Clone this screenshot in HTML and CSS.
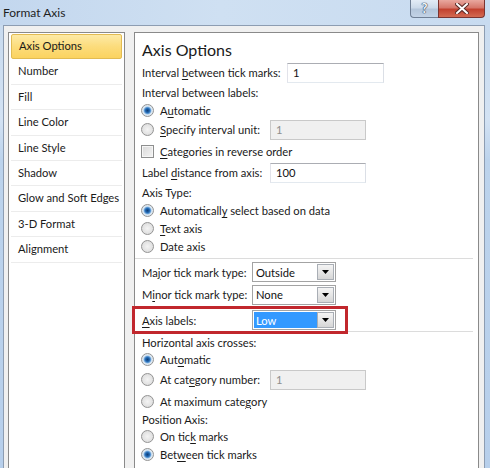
FILE: index.html
```html
<!DOCTYPE html>
<html>
<head>
<meta charset="utf-8">
<title>Format Axis</title>
<link rel="stylesheet" href="styles.css">
</head>
<body>
<div class="window">
  <div class="titlebar">
    <span class="title">Format Axis</span>
    <div class="caption-buttons">
      <div class="cbtn help">?</div>
      <div class="cbtn close">
        <svg width="14" height="11" viewBox="0 0 14 11"><path d="M2 1 L12 10 M12 1 L2 10" stroke="#5a2a26" stroke-width="4" stroke-linecap="square"/><path d="M2 1 L12 10 M12 1 L2 10" stroke="#fff" stroke-width="2" stroke-linecap="square"/></svg>
      </div>
    </div>
  </div>
  <div class="client">
    <ul class="nav">
      <li class="nav-item active">Axis Options</li>
      <li class="nav-item">Number</li>
      <li class="nav-item">Fill</li>
      <li class="nav-item">Line Color</li>
      <li class="nav-item">Line Style</li>
      <li class="nav-item">Shadow</li>
      <li class="nav-item">Glow and Soft Edges</li>
      <li class="nav-item">3-D Format</li>
      <li class="nav-item">Alignment</li>
    </ul>
    <div class="panel">
      <h1 class="panel-title">Axis Options</h1>

      <div class="row h23"><span class="lbl w145">Interval <u>b</u>etween tick marks:</span><span class="input w97">1</span></div>
      <div class="row h17"><span>Interval between labels:</span></div>
      <div class="row h18"><span class="radio checked"></span><span>A<u>u</u>tomatic</span></div>
      <div class="row h21"><span class="radio"></span><span class="lbl w110"><u>S</u>pecify interval unit:</span><span class="input disabled w96">1</span></div>
      <div class="row h22"><span class="checkbox"></span><span><u>C</u>ategories in reverse order</span></div>
      <div class="row h21"><span class="lbl w128">Label <u>d</u>istance from axis:</span><span class="input w96">100</span></div>
      <div class="row h18"><span>Axis Type:</span></div>
      <div class="row h18"><span class="radio checked"></span><span>Automaticall<u>y</u> select based on data</span></div>
      <div class="row h18"><span class="radio"></span><span><u>T</u>ext axis</span></div>
      <div class="row h18"><span class="radio"></span><span>Date axis</span></div>

      <div class="separator sep-a"></div>

      <div class="row h22"><span class="lbl w110">Ma<u>j</u>or tick mark type:</span><span class="select"><span class="select-value">Outside</span><span class="select-btn"><svg width="7" height="4" viewBox="0 0 7 4"><path d="M0 0 H7 L3.5 4 Z" fill="#000"/></svg></span></span></div>
      <div class="row h23"><span class="lbl w110">M<u>i</u>nor tick mark type:</span><span class="select"><span class="select-value">None</span><span class="select-btn"><svg width="7" height="4" viewBox="0 0 7 4"><path d="M0 0 H7 L3.5 4 Z" fill="#000"/></svg></span></span></div>
      <div class="row highlight"><span class="lbl w110"><u>A</u>xis labels:</span><span class="select"><span class="select-value selected">Low</span><span class="select-btn"><svg width="7" height="4" viewBox="0 0 7 4"><path d="M0 0 H7 L3.5 4 Z" fill="#000"/></svg></span></span></div>

      <div class="separator sep-b"></div>

      <div class="row h17"><span>Horizontal axis crosses:</span></div>
      <div class="row h17"><span class="radio checked"></span><span>Aut<u>o</u>matic</span></div>
      <div class="row h23"><span class="radio"></span><span class="lbl w110">At cat<u>e</u>gory number:</span><span class="input disabled w96">1</span></div>
      <div class="row h20"><span class="radio"></span><span>At maximum cate<u>g</u>ory</span></div>
      <div class="row h17"><span>Position Axis:</span></div>
      <div class="row h17"><span class="radio"></span><span>On tic<u>k</u> marks</span></div>
      <div class="row h19"><span class="radio checked"></span><span>Bet<u>w</u>een tick marks</span></div>
    </div>
  </div>
</div>
</body>
</html>
```

FILE: styles.css
```css
* { box-sizing: border-box; }

html, body {
  margin: 0;
  padding: 0;
  overflow: hidden;
}

body {
  font-family: Lato, "Open Sans", sans-serif;
  font-size: 11.2px;
  color: #1a1a1a;
}

u { text-decoration: underline; text-underline-offset: 2px; }

.window {
  width: 490px;
  height: 468px;
  display: flex;
  flex-direction: column;
  background: linear-gradient(180deg, #c6d9ee 0px, #d3e2f3 120px, #bcd3ec 160px, #b7cfeb 468px);
  overflow: hidden;
}

/* Title bar */
.titlebar {
  height: 25px;
  display: flex;
  align-items: flex-start;
  padding-right: 5px;
  flex-shrink: 0;
  background: linear-gradient(90deg, #c3d7ee 0%, #cfe0f2 45%, #c8dbf0 100%);
}

.title {
  font-size: 12px;
  color: #1e1e1e;
  padding: 5px 0 0 3px;
  line-height: 16px;
}

.caption-buttons {
  margin-left: auto;
  display: flex;
  height: 18px;
}

.cbtn {
  height: 18px;
  display: flex;
  align-items: center;
  justify-content: center;
  border: 1px solid #6f7f95;
  border-top: none;
}

.help {
  width: 28px;
  border-radius: 0 0 0 4px;
  border-right: none;
  background: linear-gradient(180deg, #e3ecf6 0%, #ccdaea 45%, #b4c6db 55%, #c3d3e6 100%);
  font-size: 13px;
  font-weight: bold;
  color: #f4f7fb;
  text-shadow: 0 0 1px #2c3e57, 0 0 1px #2c3e57, 0 0 1px #2c3e57;
  line-height: 1;
}

.close {
  width: 47px;
  border-color: #7a3431;
  border-radius: 0 0 4px 0;
  background: linear-gradient(180deg, #e9a89f 0%, #d6776b 45%, #c2412f 55%, #d36a52 100%);
}

/* Client area */
.client {
  flex: 1;
  display: flex;
  margin: 0 5px 0 3px;
  padding: 6px 5px 0 4px;
  background: #f0f0f0;
  border: 1px solid #8d9db2;
  border-bottom: none;
  min-height: 0;
}

/* Left navigation list */
.nav {
  list-style: none;
  margin: 0;
  padding: 1px 1px 0 2px;
  width: 117px;
  flex-shrink: 0;
  background: #fff;
  border: 1px solid #8a8a8a;
  border-bottom: none;
}

.nav-item {
  height: 25.4px;
  line-height: 24px;
  padding-left: 7px;
  color: #1a1a1a;
  border-bottom: 1px solid #ececec;
  margin: 0 1px 0 0;
  white-space: nowrap;
}

.nav-item.active {
  background: linear-gradient(180deg, #fdeaa6 0%, #fcdc7c 50%, #fbd35f 100%);
  border: 1px solid #e2bb52;
  border-radius: 2px;
  line-height: 22px;
}

/* Right panel */
.panel {
  margin-left: 9px;
  flex: 1;
  background: #fff;
  border: 1px solid #8a8a8a;
  border-bottom: none;
  padding: 6px 0 0 0;
}

.panel-title {
  margin: 0;
  height: 22px;
  padding-left: 7px;
  font-size: 16px;
  font-weight: normal;
  line-height: 22px;
  color: #1a1a1a;
}

.row {
  display: flex;
  align-items: center;
  padding-left: 7px;
  white-space: nowrap;
}

.h17 { height: 17px; }
.h18 { height: 18px; }
.h19 { height: 19px; }
.h20 { height: 20px; }
.h21 { height: 21px; }
.h22 { height: 22px; }
.h23 { height: 23px; }

.lbl { flex-shrink: 0; }
.w145 { width: 145px; }
.w128 { width: 128px; }
.w110 { width: 110px; }

.input {
  height: 20px;
  display: flex;
  align-items: center;
  padding-left: 5px;
  background: #fff;
  border: 1px solid #abadb3;
  border-left-color: #e2e3ea;
  border-right-color: #dbdfe6;
  border-bottom-color: #e3e9ef;
  color: #111;
}

.w97 { width: 97px; }
.w96 { width: 96px; }

.input.disabled {
  background: #f0f0f0;
  border-color: #c9c9c9;
  color: #8e8e8e;
}

/* Radio & checkbox */
.radio {
  width: 13px;
  height: 13px;
  border-radius: 50%;
  border: 1px solid #939393;
  background: radial-gradient(circle at 50% 50%, #f4f4f4 0%, #e4e4e4 55%, #d6d6d6 100%);
  margin: 0 6px 0 -1px;
  flex-shrink: 0;
}

.radio.checked {
  background: radial-gradient(circle at 50% 50%, #0f3f78 0%, #1f64ad 25%, #5d9ad6 40%, #d8e6f2 55%, #eeeeee 100%);
}

.checkbox {
  width: 13px;
  height: 13px;
  border: 1px solid #8e8f8f;
  background: linear-gradient(135deg, #d9d9d9 0%, #f4f4f4 100%);
  box-shadow: inset 0 0 0 1px #f6f6f6;
  margin: 0 6px 0 -1px;
  flex-shrink: 0;
}

/* Select */
.select {
  width: 84px;
  height: 20px;
  display: flex;
  align-items: stretch;
  border: 1px solid #a3a3a3;
  background: #fff;
  padding: 1px;
}

.select-value {
  flex: 1;
  display: flex;
  align-items: center;
  padding-left: 2px;
  color: #111;
}

.select-value.selected {
  background: #3399ff;
  color: #fff;
}

.select-btn {
  width: 17px;
  display: flex;
  align-items: center;
  justify-content: center;
  border: 1px solid #a9aeb5;
  background: linear-gradient(180deg, #f4f4f4 0%, #e6e6e6 50%, #d6d6d6 100%);
}

/* Highlighted row (annotation) */
.highlight {
  position: relative;
  z-index: 1;
  width: fit-content;
  height: 28px;
  margin-left: -3px;
  padding: 0 9px 0 7px;
  border: 3px solid #c1272d;
}

/* Separators */
.separator {
  height: 1px;
  background: #dcdcdc;
  margin-right: 5px;
}

.sep-a { margin-top: 3px; margin-bottom: 2px; }
.sep-b { margin-top: -3px; margin-bottom: 2px; }
```
